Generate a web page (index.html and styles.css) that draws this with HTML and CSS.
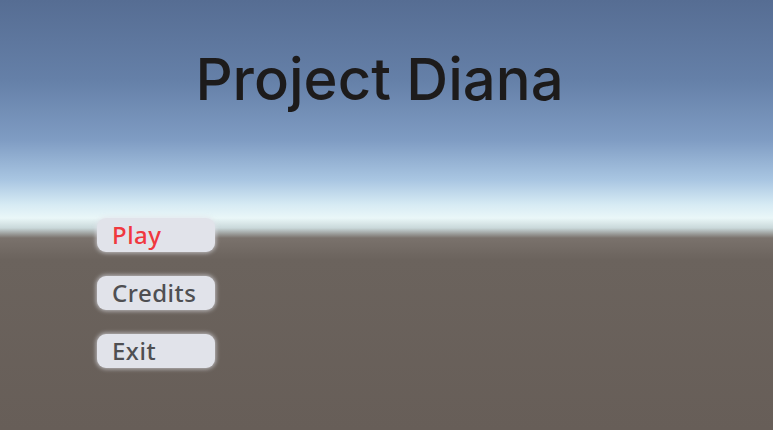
FILE: index.html
```html
<!DOCTYPE html>
<html lang="en">
  <head>
    <meta charset="UTF-8" />
    <meta name="viewport" content="width=device-width, initial-scale=1.0" />
    <title>Project Diana</title>
    <link rel="stylesheet" href="styles.css">
  </head>
  <body>
    <div class="scene">
      <h1 class="title">Project Diana</h1>

      <div class="menu">
        <button type="button" class="menu-btn active">Play</button>
        <button type="button" class="menu-btn">Credits</button>
        <button type="button" class="menu-btn">Exit</button>
      </div>
    </div>
  </body>
</html>
```

FILE: styles.css
```css
body {
  margin: 0;
  background: #685f59;
}

.scene {
  width: 773px;
  height: 430px;
  overflow: hidden;
  background: linear-gradient(
    to bottom,
    #566d93 0px,
    #6580a8 80px,
    #7f9cc3 140px,
    #a9c6e2 180px,
    #d7ebf4 205px,
    #eaf7f8 218px,
    #c9d8da 228px,
    #7a726c 238px,
    #6b635d 260px,
    #675e58 430px
  );
}

.title {
  margin: 0;
  padding-top: 44px;
  padding-right: 14px;
  text-align: center;
  font-family: Inter, sans-serif;
  font-weight: 500;
  font-size: 58px;
  line-height: 70px;
  color: #1d1b1b;
}

.menu {
  display: flex;
  flex-direction: column;
  align-items: flex-start;
  gap: 24px;
  margin-top: 104px;
  padding-left: 97px;
}

.menu-btn {
  width: 118px;
  height: 34px;
  padding: 0 0 0 15px;
  text-align: left;
  border: none;
  border-radius: 9px;
  background: #e1e3ea;
  box-shadow: 0 0 4px 1px rgba(225, 227, 234, 0.7);
  font-family: "Noto Sans", sans-serif;
  font-weight: 500;
  font-size: 24px;
  letter-spacing: 0.5px;
  line-height: 34px;
  color: #4f4f52;
}

.menu-btn.active {
  color: #f0383f;
}
```
